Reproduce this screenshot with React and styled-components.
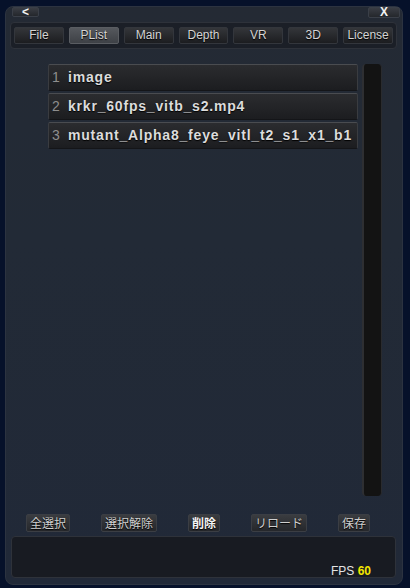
import React from 'react';
import styled, {createGlobalStyle} from 'styled-components';

const Global = createGlobalStyle`
  html, body {
    margin: 0;
    padding: 0;
    background: #06112a;
    font-family: "Liberation Sans", Arial, "Noto Sans CJK JP", sans-serif;
  }
  body {
    width: 410px;
    height: 588px;
    overflow: hidden;
  }
`;

const Panel = styled.div`
  box-sizing: border-box;
  width: 398px;
  height: 579px;
  margin: 6px 0 0 5px;
  padding-bottom: 6px;
  border-radius: 8px;
  border: 1px solid #2c3340;
  background: linear-gradient(180deg, #242a34 0%, #222a36 40%, #212938 100%);
  display: flex;
  flex-direction: column;
`;

const TitleBar = styled.div`
  height: 14px;
  box-sizing: border-box;
  padding: 0 2px 0 6px;
  display: flex;
  justify-content: space-between;
  align-items: flex-start;
`;

const TitleButton = styled.div`
  width: ${p => p.$w}px;
  height: ${p => p.$h}px;
  box-sizing: border-box;
  border-radius: 2px;
  border: 1px solid #3a3f48;
  background: linear-gradient(180deg, #3a3d44 0%, #24272c 100%);
  color: #f2f2f2;
  font-size: 12px;
  font-weight: bold;
  line-height: 8px;
  text-align: center;
`;

const TabBar = styled.div`
  margin: 1px 5px 0 4px;
  height: 27px;
  box-sizing: border-box;
  padding: 4px 3px;
  border-radius: 4px;
  border: 1px solid #2e323a;
  background: #1b1f27;
  display: flex;
  gap: 5px;
`;

const Tab = styled.div`
  width: 50px;
  height: 17px;
  box-sizing: border-box;
  border-radius: 2px;
  border: 1px solid ${p => (p.$active ? '#5a5d62' : '#33363c')};
  background: ${p =>
    p.$active
      ? 'linear-gradient(180deg, #55585d 0%, #3e4146 100%)'
      : 'linear-gradient(180deg, #34363a 0%, #1c1d20 100%)'};
  color: #d4d4d4;
  font-size: 12px;
  line-height: 15px;
  text-align: center;
  text-shadow: 0 1px 1px #000;
`;

const Content = styled.div`
  margin-top: 15px;
  height: 434px;
  padding-left: 42px;
  display: flex;
  gap: 4px;
`;

const List = styled.div`
  width: 310px;
  display: flex;
  flex-direction: column;
  gap: 2px;
`;

const Item = styled.div`
  height: 27px;
  box-sizing: border-box;
  padding-left: 3px;
  border-top: 1px solid #4a4c50;
  border-left: 1px solid #3a3c40;
  border-right: 1px solid #3a3c40;
  border-bottom: 1px solid #141518;
  border-radius: 2px;
  background: linear-gradient(180deg, #2b2c2f 0%, #1c1d20 100%);
  display: flex;
  align-items: center;
  white-space: nowrap;
  overflow: hidden;
`;

const Num = styled.span`
  width: 16px;
  color: #8e8e8e;
  font-size: 14px;
`;

const Name = styled.span`
  color: #dcdcdc;
  font-size: 14px;
  font-weight: bold;
  letter-spacing: 0.8px;
  text-shadow: 0 1px 1px #000;
`;

const Scroll = styled.div`
  width: 20px;
  box-sizing: border-box;
  border-radius: 4px;
  border-left: 2px solid #2e2f32;
  border-right: 1px solid #2a2b2e;
  background: #131313;
`;

const Buttons = styled.div`
  margin-top: 18px;
  padding-left: 20px;
  display: flex;
  gap: 31px;
`;

const Btn = styled.div`
  height: 18px;
  box-sizing: border-box;
  padding: 0 3px;
  border-radius: 2px;
  border: 1px solid #3b3e44;
  background: linear-gradient(180deg, #3a3c40 0%, #25272b 100%);
  color: ${p => (p.$strong ? '#f4f4f4' : '#cfcfcf')};
  font-size: 12px;
  font-weight: ${p => (p.$strong ? 'bold' : 'normal')};
  line-height: 16px;
  font-family: "Noto Sans CJK JP", sans-serif;
  text-shadow: 0 1px 1px #000;
`;

const Log = styled.div`
  margin: 4px 6px 0 5px;
  height: 42px;
  box-sizing: border-box;
  border-radius: 4px;
  border: 1px solid #2e323a;
  background: #181b22;
  display: flex;
  justify-content: flex-end;
  align-items: flex-end;
  padding: 0 24px 0 0;
`;

const Fps = styled.div`
  font-size: 12px;
  line-height: 12px;
  margin-bottom: 0;
  color: #e4e4e4;
  & b {
    color: #f2e600;
  }
`;

const tabs = ['File', 'PList', 'Main', 'Depth', 'VR', '3D', 'License'];
const files = ['image', 'krkr_60fps_vitb_s2.mp4', 'mutant_Alpha8_feye_vitl_t2_s1_x1_b1'];
const actions = ['全選択', '選択解除', '削除', 'リロード', '保存'];

export default function App() {
  return (
    <>
      <Global />
      <Panel>
        <TitleBar>
          <TitleButton $w={27} $h={10}>&lt;</TitleButton>
          <TitleButton $w={32} $h={11}>X</TitleButton>
        </TitleBar>
        <TabBar>
          {tabs.map(t => (
            <Tab key={t} $active={t === 'PList'}>{t}</Tab>
          ))}
        </TabBar>
        <Content>
          <List>
            {files.map((f, i) => (
              <Item key={f}>
                <Num>{i + 1}</Num>
                <Name>{f}</Name>
              </Item>
            ))}
          </List>
          <Scroll />
        </Content>
        <Buttons>
          {actions.map(a => (
            <Btn key={a} $strong={a === '削除'}>{a}</Btn>
          ))}
        </Buttons>
        <Log>
          <Fps>FPS <b>60</b></Fps>
        </Log>
      </Panel>
    </>
  );
}
